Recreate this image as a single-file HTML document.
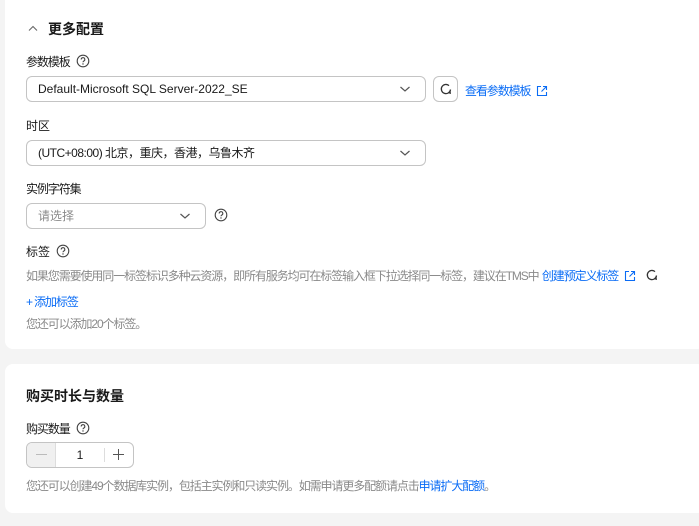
<!DOCTYPE html>
<html><head><meta charset="utf-8"><style>
*{margin:0;padding:0;box-sizing:border-box}
body{width:699px;height:526px;background:#f4f4f4;font-family:"Liberation Sans","Noto Sans CJK SC",sans-serif;font-size:12px;color:#191919;position:relative;overflow:hidden}
.card{position:absolute;left:5px;width:700px;background:#fff;border-radius:8px}
.a{position:absolute;white-space:nowrap}
.box{position:absolute;border:1px solid #c4c4c4;border-radius:6px;height:26px;line-height:24px;padding-left:11px;background:#fff}
.chev{position:absolute;right:14px;top:8px}
.g{color:#8a8a8a}
.c{letter-spacing:-1.1px}
.b{color:#0a6cf5}
.q{display:inline-block;vertical-align:-2px}
</style></head><body>
<svg width="0" height="0" style="position:absolute"><defs>
<symbol id="q" viewBox="0 0 14 14"><circle cx="7" cy="7" r="5.8" fill="none" stroke="#444" stroke-width="1.1"/><path d="M5.2 5.5a1.8 1.8 0 1 1 2.5 1.6c-.5.3-.7.6-.7 1.2" fill="none" stroke="#444" stroke-width="1.1"/><circle cx="7" cy="10" r=".7" fill="#444"/></symbol>
<symbol id="cv" viewBox="0 0 12 8"><path d="M1.5 2l4.5 4 4.5-4" fill="none" stroke="#555" stroke-width="1.2"/></symbol>
<symbol id="rf" viewBox="0 0 14 14"><path d="M11.5 7.5A4.6 4.6 0 1 1 10 3.6" fill="none" stroke="#333" stroke-width="1.3"/><path d="M8.5 11l3.5 1-0.5-3.5z" fill="#333"/></symbol>
<symbol id="ext" viewBox="0 0 12 12"><path d="M5 1.5H1.5v9h9V7M7 1.5h3.5V5M10.5 1.5L5.5 6.5" fill="none" stroke="#0a6cf5" stroke-width="1.1"/></symbol>
</defs></svg>

<div class="card" style="top:-8px;height:357px"></div>
<div class="card" style="top:364px;height:149px"></div>

<svg class="a" style="left:28px;top:25px" width="10" height="7" viewBox="0 0 10 7"><path d="M1 5.5l4-4 4 4" fill="none" stroke="#666" stroke-width="1.1"/></svg>
<div class="a" style="left:48px;top:19px;font-size:14px;font-weight:bold">更多配置</div>

<div class="a" style="left:26px;top:53px"><span class="c">参数模板</span> <svg class="q" width="14" height="14" style="margin-left:3px"><use href="#q"/></svg></div>
<div class="box" style="left:26px;top:76px;width:400px">Default-Microsoft SQL Server-2022_SE<svg class="chev" width="12" height="8"><use href="#cv"/></svg></div>
<div class="box" style="left:433px;top:76px;width:25px;padding:0"><svg style="position:absolute;left:5px;top:5px" width="14" height="14"><use href="#rf"/></svg></div>
<div class="a b" style="left:465px;top:82px"><span class="c">查看参数模板</span> <svg class="q" width="12" height="12" style="margin-left:2px"><use href="#ext"/></svg></div>

<div class="a" style="left:26px;top:117px">时区</div>
<div class="box" style="left:26px;top:140px;width:400px"><span style="letter-spacing:-0.5px">(UTC+08:00) 北京，重庆，香港，乌鲁木齐</span><svg class="chev" width="12" height="8"><use href="#cv"/></svg></div>

<div class="a c" style="left:26px;top:180px">实例字符集</div>
<div class="box g" style="left:26px;top:203px;width:180px">请选择<svg class="chev" width="12" height="8"><use href="#cv"/></svg></div>
<svg class="a" style="left:214px;top:208px" width="14" height="14"><use href="#q"/></svg>

<div class="a" style="left:26px;top:243px">标签 <svg class="q" width="14" height="14" style="margin-left:3px"><use href="#q"/></svg></div>
<div class="a g" style="left:26px;top:267px"><span class="c">如果您需要使用同一标签标识多种云资源，即所有服务均可在标签输入框下拉选择同一标签，建议在TMS中</span> <span class="b c">创建预定义标签</span> <svg class="q" width="12" height="12" style="margin-left:2px"><use href="#ext"/></svg> <svg class="q" width="14" height="14" style="margin-left:6px"><use href="#rf"/></svg></div>
<div class="a b c" style="left:26px;top:293px">+ 添加标签</div>
<div class="a g c" style="left:26px;top:315px">您还可以添加20个标签。</div>

<div class="a" style="left:26px;top:386px;font-size:14px;font-weight:bold">购买时长与数量</div>
<div class="a" style="left:26px;top:420px"><span class="c">购买数量</span> <svg class="q" width="14" height="14" style="margin-left:3px"><use href="#q"/></svg></div>
<div class="box" style="left:26px;top:442px;width:108px;padding:0;overflow:hidden">
 <div style="position:absolute;left:0;top:0;width:29px;height:24px;background:#f0f0f0;border-right:1px solid #ddd"></div>
 <div style="position:absolute;left:9px;top:11px;width:11px;height:1px;background:#bbb"></div>
 <div style="position:absolute;left:29px;width:48px;top:0;text-align:center">1</div>
 <div style="position:absolute;left:77px;top:5px;width:1px;height:14px;background:#ddd"></div>
 <div style="position:absolute;left:86px;top:11px;width:11px;height:1px;background:#555"></div>
 <div style="position:absolute;left:91px;top:6px;width:1px;height:11px;background:#555"></div>
</div>
<div class="a g c" style="left:26px;top:477px">您还可以创建49个数据库实例，包括主实例和只读实例。如需申请更多配额请点击<span class="b">申请扩大配额</span>。</div>
</body></html>
